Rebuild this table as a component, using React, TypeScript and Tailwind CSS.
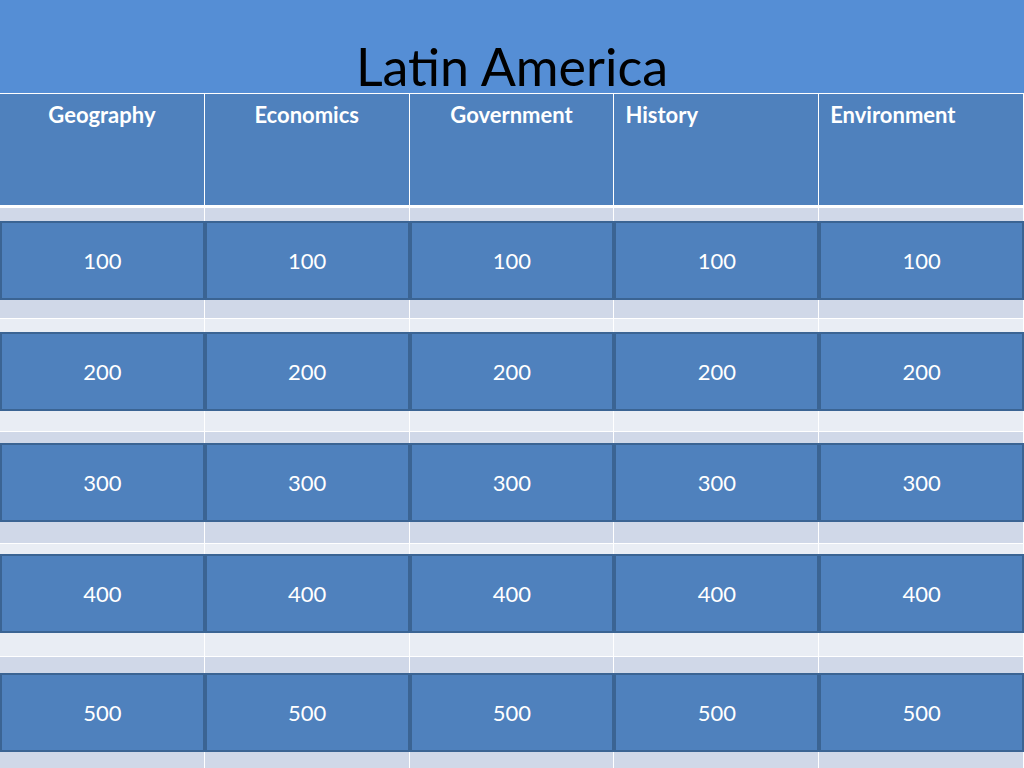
const categories = [
  { name: "Geography", align: "center" },
  { name: "Economics", align: "center" },
  { name: "Government", align: "center" },
  { name: "History", align: "left" },
  { name: "Environment", align: "left" },
];

// each board row: background band, strip above the buttons, strip below
const rows = [
  { value: 100, bg: "bg-[#d0d8e8]", top: "h-[13px]", bottom: "h-[18px]" },
  { value: 200, bg: "bg-[#e9edf4]", top: "h-[13px]", bottom: "h-[20px]" },
  { value: 300, bg: "bg-[#d0d8e8]", top: "h-[11px]", bottom: "h-[21px]" },
  { value: 400, bg: "bg-[#e9edf4]", top: "h-[10px]", bottom: "h-[23px]" },
  { value: 500, bg: "bg-[#d0d8e8]", top: "h-[16px]", bottom: "h-[18px]" },
];

function Strip({ className }: { className: string }) {
  return (
    <div className={`grid grid-cols-5 shrink-0 ${className}`}>
      {categories.map((c) => (
        <div key={c.name} className="border-r border-white" />
      ))}
    </div>
  );
}

export default function App() {
  return (
    <div
      className="w-[1024px] h-[768px] overflow-hidden bg-[#d0d8e8] flex flex-col"
      style={{ fontFamily: "Lato, 'Open Sans', sans-serif" }}
    >
      {/* Title band */}
      <header className="h-[93px] shrink-0 bg-[#558ed5] flex items-end justify-center">
        <h1 className="text-[52px] leading-none text-black pb-px">Latin America</h1>
      </header>

      {/* Category headers */}
      <div className="grid grid-cols-5 h-[112px] shrink-0 bg-[#4f81bd] border-t border-white">
        {categories.map((c) => (
          <div
            key={c.name}
            className={`border-r border-white pt-[9px] text-[22px] font-bold text-white leading-6 ${
              c.align === "center" ? "text-center" : "text-left pl-[11px]"
            }`}
          >
            {c.name}
          </div>
        ))}
      </div>
      <div className="h-[3px] shrink-0 bg-white" />

      {/* Point rows */}
      {rows.map((r, i) => (
        <div key={r.value} className={`shrink-0 ${r.bg} ${i > 0 ? "border-t border-white" : ""}`}>
          <Strip className={r.top} />
          <div className="grid grid-cols-5 h-[79px]">
            {categories.map((c) => (
              <button
                key={c.name}
                className="bg-[#4f81bd] border-2 border-[#3b6493] text-white text-[22px] flex items-center justify-center"
              >
                {r.value}
              </button>
            ))}
          </div>
          <Strip className={r.bottom} />
        </div>
      ))}
    </div>
  );
}
